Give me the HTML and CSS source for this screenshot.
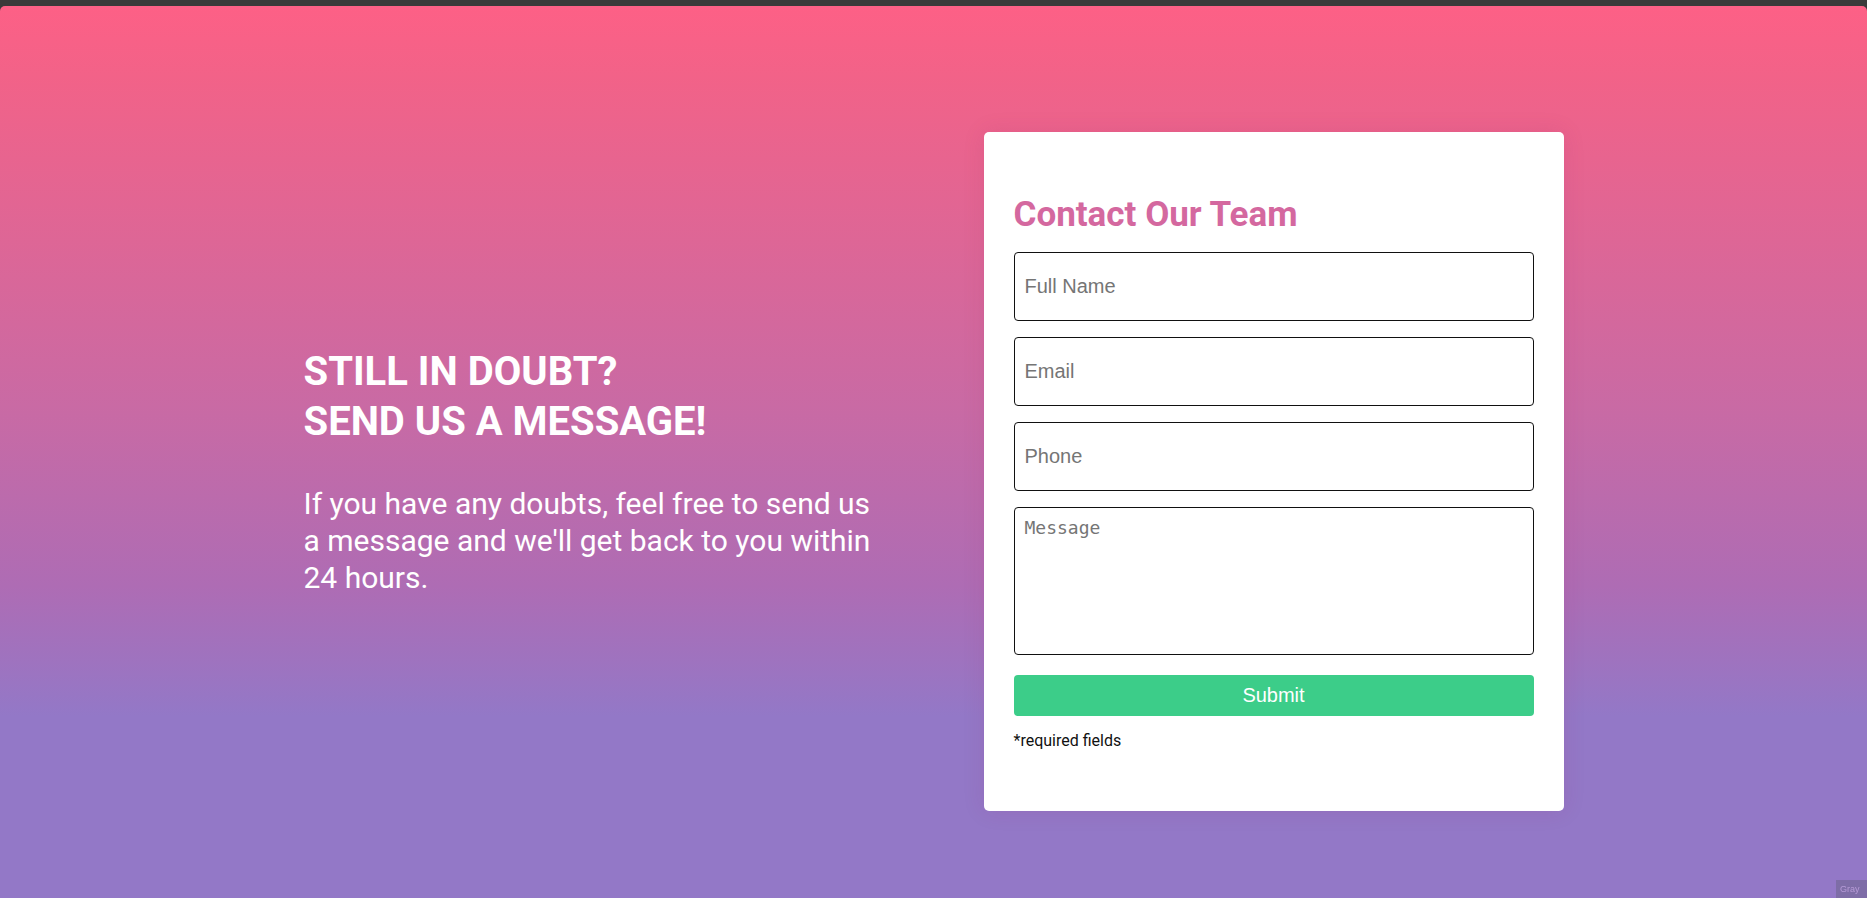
FILE: index.html
```html
<!DOCTYPE html>
<html lang="en">
<head>
<meta charset="utf-8">
<title>Contact</title>
<link rel="stylesheet" href="styles.css">
</head>
<body>
  <div class="page">
    <section class="contact">
      <div class="container">
        <div class="intro">
          <h1 class="intro-title">STILL IN DOUBT?<br>SEND US A MESSAGE!</h1>
          <p class="intro-text">If you have any doubts, feel free to send us a message and we'll get back to you within 24 hours.</p>
        </div>
        <form class="card">
          <h2 class="card-title">Contact Our Team</h2>
          <input class="field" type="text" placeholder="Full Name">
          <input class="field" type="email" placeholder="Email">
          <input class="field" type="tel" placeholder="Phone">
          <textarea class="field field-area" placeholder="Message"></textarea>
          <button class="submit" type="button">Submit</button>
          <p class="note">*required fields</p>
        </form>
      </div>
    </section>
  </div>
  <div class="badge">Gray</div>
</body>
</html>
```
FILE: styles.css
```css
html, body {
  margin: 0;
  padding: 0;
}

body {
  background: #3a3a3a;
  padding-top: 6px;
  font-family: Roboto, "Liberation Sans", sans-serif;
  overflow: hidden;
}

.page {
  border-radius: 5px 5px 0 0;
  background: linear-gradient(180deg, #fd6086 0px, #f26288 70px, #c96aa4 400px, #ae6cb4 580px, #9378c7 710px, #9378c7 100%);
  min-height: 1000px;
}

.contact {
  padding: 126px 0 126px;
}

.container {
  width: 1260px;
  margin: 0 auto;
  display: flex;
  align-items: center;
  justify-content: space-between;
}

.intro {
  width: 580px;
  color: #fff;
}

.intro-title {
  margin: 0;
  font-size: 40px;
  font-weight: 700;
  line-height: 50px;
}

.intro-text {
  margin: 38px 0 0;
  font-size: 30px;
  line-height: 37px;
  font-weight: 400;
}

.card {
  width: 580px;
  box-sizing: border-box;
  background: #fff;
  border-radius: 5px;
  padding: 30px 30px 30px;
  display: flex;
  flex-direction: column;
  box-shadow: 0 0 22px rgba(150, 30, 90, 0.12);
}

.card-title {
  margin: 32px 0 17px;
  font-size: 35px;
  line-height: 41px;
  font-weight: 700;
  color: #d4689f;
}

.field {
  display: block;
  box-sizing: border-box;
  width: 100%;
  height: 69px;
  margin: 0 0 16px;
  padding: 0 10px;
  border: 1px solid #111;
  border-radius: 4px;
  font-family: "Liberation Sans", Arial, sans-serif;
  font-size: 20px;
  color: #222;
  background: #fff;
}

.field::placeholder {
  color: #757575;
}

.field-area {
  height: 148px;
  padding: 9px 10px;
  margin-bottom: 20px;
  font-family: "DejaVu Sans Mono", monospace;
  font-size: 18px;
  resize: none;
}

.submit {
  height: 41px;
  border: 0;
  border-radius: 4px;
  background: #3ccd89;
  color: #fff;
  font-family: "Liberation Sans", Arial, sans-serif;
  font-size: 20px;
  padding: 0;
}

.note {
  margin: 15px 0 31px;
  font-size: 16px;
  line-height: 19px;
  color: #111;
}

.badge {
  position: fixed;
  right: 0;
  bottom: 0;
  width: 31px;
  height: 18px;
  overflow: hidden;
  background: rgba(110, 100, 140, 0.55);
  color: rgba(200, 170, 230, 0.75);
  font-family: "Liberation Sans", sans-serif;
  font-size: 9px;
  line-height: 18px;
  padding-left: 4px;
  box-sizing: border-box;
}
```
